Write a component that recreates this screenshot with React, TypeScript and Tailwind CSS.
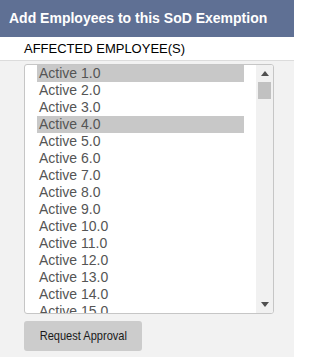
import React from "react";

const employees = Array.from({ length: 20 }, (_, i) => `Active ${i + 1}.0`);
const selected = new Set([0, 3]);

function Triangle({ up }: { up?: boolean }) {
  return (
    <svg width="8" height="5" viewBox="0 0 8 5">
      <path d={up ? "M0 5 L4 0 L8 5 Z" : "M0 0 L8 0 L4 5 Z"} fill="#505050" />
    </svg>
  );
}

export default function App() {
  return (
    <div
      className="w-[294px] h-[357px] bg-[#f2f2f2] overflow-hidden"
      style={{ fontFamily: '"Liberation Sans", Arial, sans-serif' }}
    >
      <div className="h-[37px] bg-[#5f7094] px-[9px] flex items-center text-white font-bold text-[14px]">
        Add Employees to this SoD Exemption
      </div>
      <div className="h-[24px] bg-white border-b border-[#dcdcdc] pl-[24px] flex items-center text-[13px] text-black">
        AFFECTED EMPLOYEE(S)
      </div>

      <div className="ml-[24px] mt-[3px] w-[250px] h-[250px] bg-white border border-[#c6c6c6] rounded-[3px] flex overflow-hidden">
        <div className="flex-1 pl-[12px] pr-[12px] overflow-hidden">
          {employees.map((e, i) => (
            <div
              key={e}
              className={`h-[17px] leading-[17px] pl-[2px] text-[14px] text-[#555555] whitespace-nowrap ${
                selected.has(i) ? "bg-[#c8c8c8]" : ""
              }`}
            >
              {e}
            </div>
          ))}
        </div>
        <div className="w-[17px] bg-[#f1f1f1] flex flex-col">
          <div className="h-[17px] flex items-center justify-center">
            <Triangle up />
          </div>
          <div className="mx-[2px] h-[17px] bg-[#c1c1c1]" />
          <div className="flex-1" />
          <div className="h-[17px] flex items-center justify-center">
            <Triangle />
          </div>
        </div>
      </div>

      <button className="ml-[24px] mt-[7px] h-[30px] w-[118px] bg-[#cccccc] rounded-[3px] text-[13px] text-[#1a1a1a] flex items-center justify-center">
        <span className="inline-block whitespace-nowrap scale-x-[0.85]">Request Approval</span>
      </button>
    </div>
  );
}
